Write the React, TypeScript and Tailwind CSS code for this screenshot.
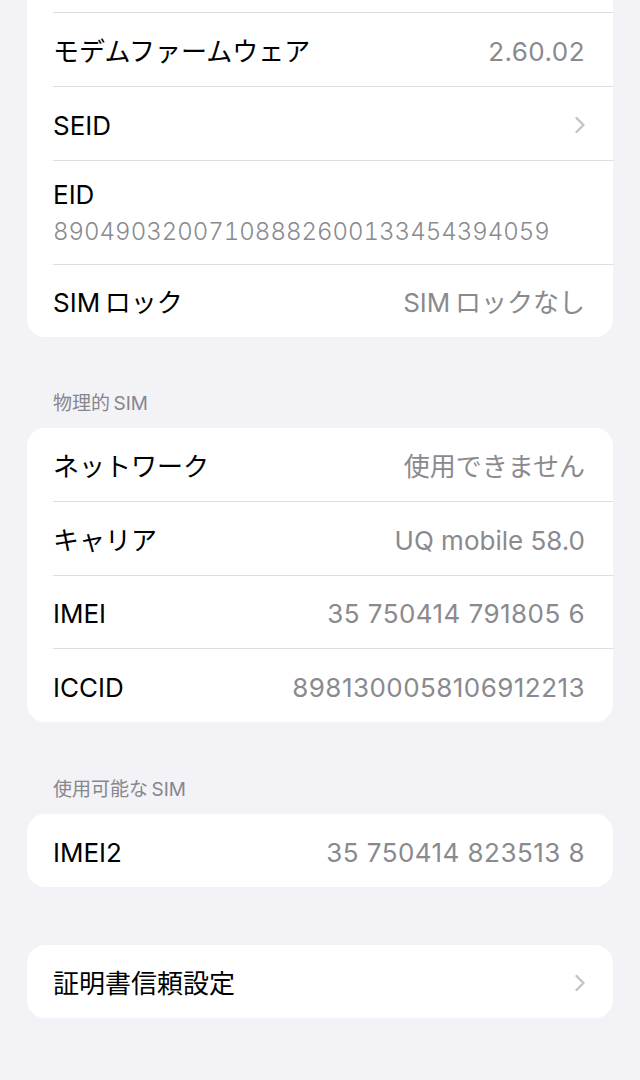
import React from "react";

const FONT = { fontFamily: 'Inter, "Noto Sans CJK JP", sans-serif' };

function Chevron() {
  return (
    <svg width="12" height="18" viewBox="0 0 12 18" fill="none" className="shrink-0 -mr-[1px]">
      <path d="M2.5 2 L9.5 9 L2.5 16" stroke="#c4c4c7" strokeWidth="2.4" strokeLinecap="round" strokeLinejoin="round" />
    </svg>
  );
}

type RowProps = { label?: string; value?: string; chevron?: boolean; first?: boolean; h?: string; num?: boolean };

function Row({ label, value, chevron, first, h = "h-[74px]", num }: RowProps) {
  return (
    <div className={`ml-[26px] pr-[28px] pt-[3px] flex items-center justify-between ${h} ${first ? "" : "border-t border-[#dedee2]"}`}>
      <span className="text-[26px] text-black">{label}</span>
      {value && (
        <span className={`text-[26px] text-[#8a8a8e] ${num ? "tracking-[0.45px]" : ""}`}>{value}</span>
      )}
      {chevron && <Chevron />}
    </div>
  );
}

function Card({ children, className = "" }: { children: React.ReactNode; className?: string }) {
  return <div className={`bg-white rounded-[18px] overflow-hidden ${className}`}>{children}</div>;
}

function Header({ text, className = "" }: { text: string; className?: string }) {
  return (
    <div className={`pl-[26px] text-[19px] leading-[22px] text-[#86868b] ${className}`}>{text}</div>
  );
}

export default function App() {
  return (
    <div className="bg-[#f2f2f7] min-h-[1080px] w-[640px] overflow-hidden px-[27px]" style={FONT}>
      <Card className="-mt-[62px] rounded-t-none">
        <Row first h="h-[74px]" />
        <Row label="モデムファームウェア" value="2.60.02" num />
        <Row label="SEID" chevron />
        <div className="ml-[26px] pr-[28px] border-t border-[#dedee2] h-[104px] flex flex-col justify-center pt-[2px]">
          <span className="text-[26px] text-black leading-[32px]">EID</span>
          <span className="text-[24px] text-[#8a8a8e] leading-[34px] tabular-nums mt-[4px] font-light">89049032007108882600133454394059</span>
        </div>
        <Row label={"SIM\u2009ロック"} value={"SIM\u2009ロックなし"} h="h-[73px]" />
      </Card>

      <Header text={"物理的\u2009SIM"} className="pt-[56px] pb-[13px]" />
      <Card>
        <Row label="ネットワーク" value="使用できません" first h="h-[73px]" />
        <Row label="キャリア" value="UQ mobile 58.0" />
        <Row label="IMEI" value="35 750414 791805 6" num h="h-[73px]" />
        <Row label="ICCID" value="8981300058106912213" num />
      </Card>

      <Header text={"使用可能な\u2009SIM"} className="pt-[57px] pb-[13px]" />
      <Card>
        <Row label="IMEI2" value="35 750414 823513 8" num first h="h-[73px]" />
      </Card>

      <Card className="mt-[58px]">
        <Row label="証明書信頼設定" chevron first h="h-[73px]" />
      </Card>
    </div>
  );
}
